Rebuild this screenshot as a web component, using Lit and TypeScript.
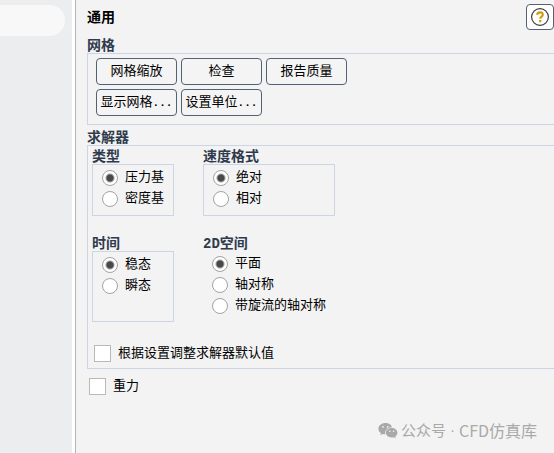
import { LitElement, html, css } from "lit";
import { customElement, property, state } from "lit/decorators.js";

@customElement("radio-group")
class RadioGroup extends LitElement {
  @property() heading = "";
  @property({ type: Array }) options: string[] = [];
  @property({ type: Boolean }) plain = false;
  @property({ type: Boolean }) tall = false;
  @state() selected = 0;

  static styles = css`
    :host {
      display: block;
    }
    fieldset {
      min-width: 0;
      margin: 0;
      padding: 0;
      border: 0;
    }
    legend {
      padding: 0;
      font-weight: 700;
      font-size: 14px;
      line-height: 14px;
      color: #2f3b4c;
      white-space: nowrap;
    }
    .options {
      padding: 2px 0 6px 9px;
      border: 1px solid #cdd5e5;
    }
    .options.tall {
      padding-bottom: 25px;
    }
    .options.plain {
      border: 0;
    }
    label {
      display: flex;
      align-items: center;
      gap: 7px;
      height: 21px;
      white-space: nowrap;
    }
    input {
      appearance: none;
      flex: none;
      box-sizing: border-box;
      width: 16px;
      height: 16px;
      margin: 0;
      border: 1px solid #a3a3a3;
      border-radius: 50%;
      background: #fff;
    }
    input:checked {
      background: radial-gradient(circle, #484848 3px, #fff 5px);
    }
  `;

  render() {
    const kind = this.plain ? "options plain" : this.tall ? "options tall" : "options";
    return html`<fieldset>
      <legend>${this.heading}</legend>
      <div class=${kind}>
        ${this.options.map(
          (text, i) => html`<label
            ><input
              type="radio"
              name="choice"
              .checked=${i === this.selected}
              @change=${() => (this.selected = i)}
            />${text}</label
          >`
        )}
      </div>
    </fieldset>`;
  }
}

@customElement("app-root")
class AppRoot extends LitElement {
  static styles = css`
    :host {
      display: flex;
      min-height: 100vh;
      overflow: hidden;
      background: #f3f3f3;
      color: #000;
      font: 13px/16px "Liberation Mono", "Noto Sans CJK SC", monospace;
    }
    .sidebar {
      flex: none;
      box-sizing: border-box;
      width: 72px;
      padding: 5px 7px 0 0;
      background: #ecedef;
    }
    .current {
      height: 31px;
      border-radius: 0 16px 16px 0;
      background: #f8f8f9;
    }
    main {
      flex: 1;
      min-width: 0;
      padding: 4px 0 0 11px;
      border-left: 1px solid #b4b4b4;
      box-shadow: -3px 0 #fff;
      margin-left: 3px;
    }
    header {
      display: flex;
      align-items: center;
      justify-content: space-between;
      margin-bottom: 9px;
    }
    h1 {
      margin: 0;
      padding-top: 2px;
      font-size: 14px;
      line-height: 16px;
    }
    button {
      box-sizing: border-box;
      border: 1px solid #536176;
      border-radius: 4px;
      background: #f4f4f4;
      color: inherit;
      font: inherit;
      white-space: nowrap;
    }
    .help {
      display: flex;
      align-items: center;
      justify-content: center;
      width: 28px;
      height: 26px;
      padding: 0;
      background: #fff;
    }
    .section {
      min-width: 0;
      margin: 0 0 6px;
      padding: 0;
      border: 0;
    }
    .section > legend {
      padding: 0;
      font-weight: 700;
      font-size: 14px;
      line-height: 14px;
      color: #2f3b4c;
    }
    .frame {
      border: 1px solid #cdd5e5;
      border-right: 0;
    }
    .actions {
      display: grid;
      grid-template-columns: repeat(3, 81px);
      gap: 4px;
      padding: 4px 8px 8px;
    }
    .actions button {
      height: 27px;
      padding: 0;
    }
    .dots {
      font-size: 11px;
      font-weight: 700;
    }
    .solver {
      padding: 4px 4px 6px;
    }
    .groups {
      display: grid;
      grid-template-columns: 82px 132px;
      gap: 21px 29px;
      margin-bottom: 23px;
    }
    .check {
      display: flex;
      align-items: center;
      gap: 7px;
      margin-left: 2px;
    }
    .check input {
      appearance: none;
      flex: none;
      box-sizing: border-box;
      width: 17px;
      height: 17px;
      margin: 0;
      border: 1px solid #b9b9b9;
      background: #fff;
    }
    .check input:checked {
      background: radial-gradient(circle, #484848 4px, #fff 5px);
    }
    .gravity {
      margin-top: 9px;
    }
    footer {
      display: flex;
      align-items: center;
      justify-content: flex-end;
      height: 24px;
      margin-top: 23px;
      padding-right: 17px;
      color: #a9a9a9;
      font-family: "Noto Sans CJK SC", sans-serif;
      font-size: 15px;
      line-height: 24px;
    }
    .account {
      margin-left: 3px;
    }
    .separator {
      margin: 0 4px;
      font-family: "Liberation Sans", sans-serif;
    }
    .name {
      font-size: 16px;
    }
  `;

  private dotted(text: string) {
    return html`<button type="button">${text}<span class="dots">...</span></button>`;
  }

  render() {
    return html`
      <nav class="sidebar"><div class="current"></div></nav>
      <main>
        <header>
          <h1>通用</h1>
          <button class="help" type="button" aria-label="帮助">
            <svg width="20" height="20" viewBox="0 0 20 20" fill="none">
              <circle cx="10" cy="10" r="8.4" stroke="#3c3c3c" stroke-width="1.2" />
              <path
                d="M7.2 7.9C7.3 6.2 8.4 5.4 10 5.4C11.7 5.4 12.8 6.3 12.8 7.7C12.8 9.6 10.2 9.6 10.2 11.8"
                stroke="#d6990c"
                stroke-width="2.1"
              />
              <rect x="9.1" y="13" width="2.2" height="2.2" fill="#d6990c" />
            </svg>
          </button>
        </header>

        <fieldset class="section">
          <legend>网格</legend>
          <div class="frame actions">
            <button type="button">网格缩放</button>
            <button type="button">检查</button>
            <button type="button">报告质量</button>
            ${this.dotted("显示网格")} ${this.dotted("设置单位")}
          </div>
        </fieldset>

        <fieldset class="section">
          <legend>求解器</legend>
          <div class="frame solver">
            <div class="groups">
              <radio-group heading="类型" .options=${["压力基", "密度基"]}></radio-group>
              <radio-group heading="速度格式" .options=${["绝对", "相对"]}></radio-group>
              <radio-group heading="时间" tall .options=${["稳态", "瞬态"]}></radio-group>
              <radio-group
                heading="2D空间"
                plain
                .options=${["平面", "轴对称", "带旋流的轴对称"]}
              ></radio-group>
            </div>
            <label class="check"><input type="checkbox" />根据设置调整求解器默认值</label>
          </div>
        </fieldset>
        <label class="check gravity"><input type="checkbox" />重力</label>

        <footer>
          <svg width="20" height="17" viewBox="0 0 20 17">
            <path
              fill="#a9a9a9"
              d="M7.4 1C3.5 1 .4 3.5.4 6.7c0 1.8 1 3.3 2.5 4.4l-.6 2 2.3-1.2c.8.3 1.8.4 2.7.4C6.6 8.6 9.7 5.3 14 5.3 13.5 2.8 10.8 1 7.4 1Z"
            />
            <path
              fill="#a9a9a9"
              d="M13.7 6.1c-3.3 0-5.8 2.1-5.8 4.7s2.5 4.7 5.8 4.7c.8 0 1.5-.1 2.1-.3l2 1-.5-1.7c1.300-.9 2.100-2.200 2.100-3.700 0-2.600-2.500-4.700-5.700-4.700Z"
            />
            <g fill="#f3f3f3">
              <circle cx="5" cy="4.8" r=".9" />
              <circle cx="9.7" cy="4.8" r=".9" />
              <circle cx="11.8" cy="9.3" r=".8" />
              <circle cx="15.6" cy="9.3" r=".8" />
            </g>
          </svg>
          <span class="account">公众号</span><span class="separator">·</span
          ><span class="name">CFD仿真库</span>
        </footer>
      </main>
    `;
  }
}
